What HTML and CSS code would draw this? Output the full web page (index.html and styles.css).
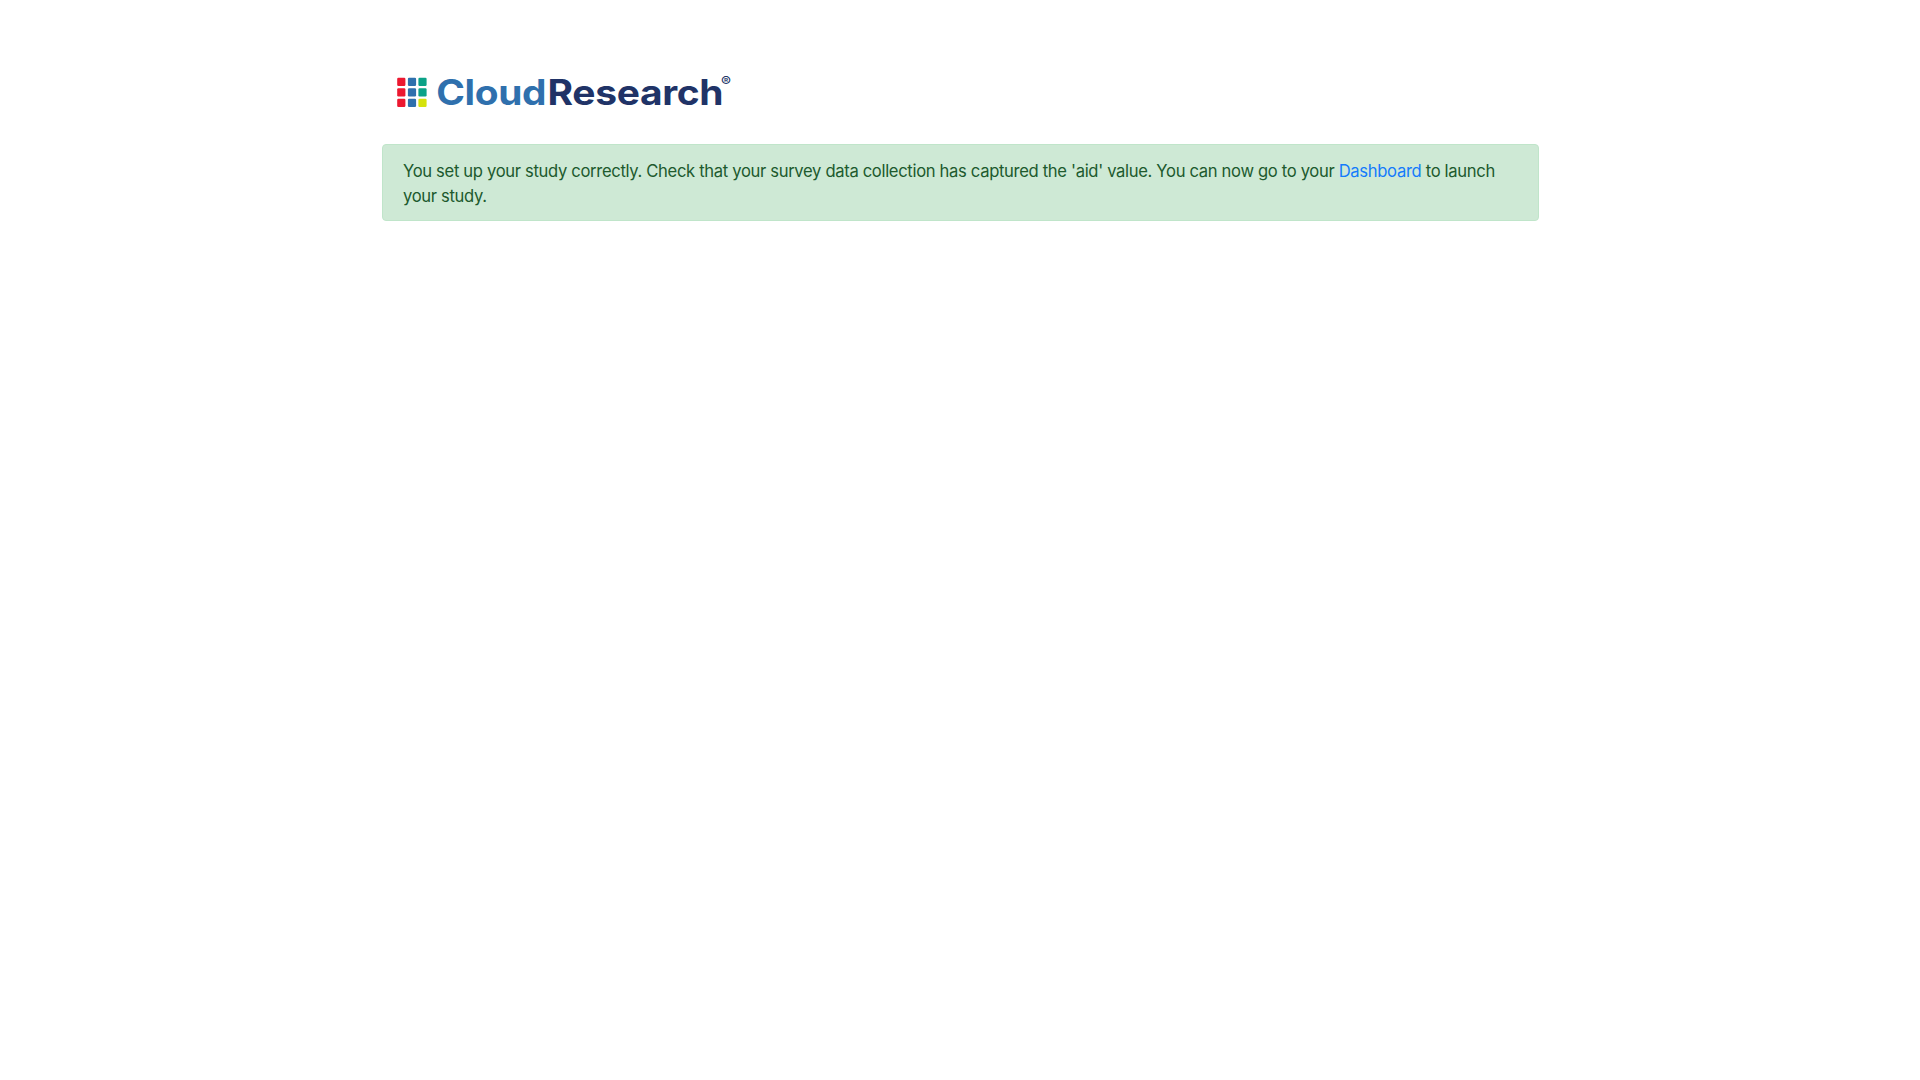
FILE: index.html
```html
<!DOCTYPE html>
<html lang="en">
<head>
<meta charset="utf-8">
<title>CloudResearch</title>
<link rel="stylesheet" href="styles.css">
</head>
<body>
<main class="container">
  <header class="brand">
    <svg class="logo" width="350" height="50" viewBox="0 0 350 50" role="img" aria-label="CloudResearch">
      <g class="red"><rect x="0.2" y="12.7" width="8.2" height="8.2" rx="1.2"/><rect x="0.2" y="23.2" width="8.2" height="8.2" rx="1.2"/><rect x="0.2" y="33.8" width="8.2" height="8.2" rx="1.2"/></g>
      <g class="blue"><rect x="10.9" y="12.7" width="8.2" height="8.2" rx="1.2"/><rect x="10.9" y="23.2" width="8.2" height="8.2" rx="1.2"/><rect x="10.9" y="33.8" width="8.2" height="8.2" rx="1.2"/></g>
      <g class="green"><rect x="21.4" y="12.7" width="8.2" height="8.2" rx="1.2"/><rect x="21.4" y="23.2" width="8.2" height="8.2" rx="1.2"/></g>
      <rect class="lime" x="21.4" y="33.8" width="8.2" height="8.2" rx="1.2"/>
      <text class="word blue" x="39.2" y="39.7" textLength="110" lengthAdjust="spacingAndGlyphs">Cloud</text>
      <text class="word navy" x="150.6" y="39.7" textLength="175.6" lengthAdjust="spacingAndGlyphs">Research</text>
      <text class="mark navy" x="323.9" y="20.6" textLength="10" lengthAdjust="spacingAndGlyphs">®</text>
    </svg>
  </header>
  <div class="alert">You set up your study correctly. Check that your survey data collection has captured the 'aid' value. You can now go to your <a class="link" href="#">Dashboard</a> to launch your study.</div>
</main>
</body>
</html>
```
FILE: styles.css
```css
body {
  margin: 0;
  background: #fff;
  font-family: Inter, "Liberation Sans", sans-serif;
}

.container {
  width: 1157px;
  margin: 0 auto;
  padding: 65px 0 0 1px;
}

.brand {
  height: 79px;
  padding-left: 15px;
}

.logo {
  display: block;
  overflow: visible;
}

.word {
  font-size: 35px;
  font-weight: 700;
  letter-spacing: -0.3px;
}

.mark {
  font-size: 12.5px;
  font-weight: 500;
}

.red { fill: #ec1830; }
.blue { fill: #2f70ad; }
.green { fill: #0ba287; }
.lime { fill: #d5e20c; }
.navy { fill: #203367; }

.alert {
  box-sizing: border-box;
  height: 77px;
  padding: 14px 20px 12px;
  border: 1px solid #c0e5ca;
  border-radius: 4px;
  background: #cee9d5;
  color: #205a2e;
  font-size: 16.6px;
  letter-spacing: -0.328px;
  line-height: 25px;
}

.link {
  color: #157bfb;
  text-decoration: none;
}
```
